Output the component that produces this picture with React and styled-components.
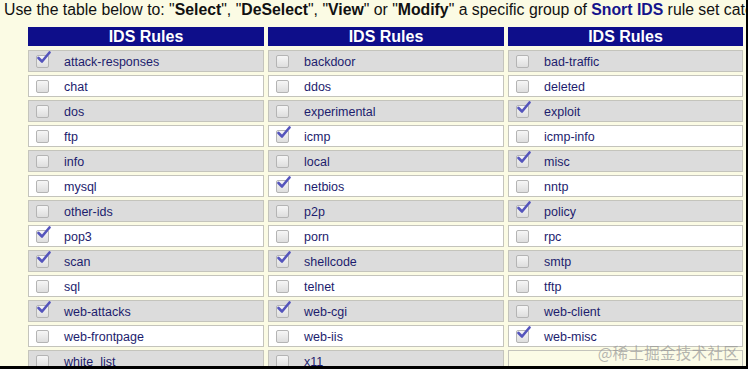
import React from "react";
import styled, { createGlobalStyle } from "styled-components";

const GlobalStyle = createGlobalStyle`
  html, body {
    margin: 0;
    padding: 0;
    background: #000;
  }
  body {
    font-family: "Liberation Sans", Arial, sans-serif;
  }
`;

const columns = [
  [
    ["attack-responses", true], ["chat", false], ["dos", false], ["ftp", false],
    ["info", false], ["mysql", false], ["other-ids", false], ["pop3", true],
    ["scan", true], ["sql", false], ["web-attacks", true], ["web-frontpage", false],
    ["white_list", false],
  ],
  [
    ["backdoor", false], ["ddos", false], ["experimental", false], ["icmp", true],
    ["local", false], ["netbios", true], ["p2p", false], ["porn", false],
    ["shellcode", true], ["telnet", false], ["web-cgi", true], ["web-iis", false],
    ["x11", false],
  ],
  [
    ["bad-traffic", false], ["deleted", false], ["exploit", true], ["icmp-info", false],
    ["misc", true], ["nntp", false], ["policy", true], ["rpc", false],
    ["smtp", false], ["tftp", false], ["web-client", false], ["web-misc", true],
    null,
  ],
];

export default function App() {
  const rows = columns[0].map((_, i) => columns.map((col) => col[i]));

  return (
    <>
      <GlobalStyle />
      <Frame>
        <Intro>
          Use the table below to: "<b>Select</b>", "<b>DeSelect</b>", "<b>View</b>" or "<b>Modify</b>" a
          specific group of <Brand>Snort IDS</Brand> rule set categories
        </Intro>
        <Grid>
          {columns.map((_, i) => (
            <Header key={"h" + i}>IDS Rules</Header>
          ))}
          {rows.map((row, r) =>
            row.map((item, c) =>
              item ? (
                <Cell key={r + "-" + c} $shade={r % 2 === 0}>
                  <Box $checked={item[1]}>
                    {item[1] && (
                      <svg width="15" height="13" viewBox="0 0 15 13">
                        <path
                          d="M2.5 7 L6 10.5 L13.5 1.5"
                          fill="none"
                          stroke="#5454bc"
                          strokeWidth="2.6"
                          strokeLinecap="round"
                          strokeLinejoin="round"
                        />
                      </svg>
                    )}
                  </Box>
                  <Label>{item[0]}</Label>
                </Cell>
              ) : (
                <Empty key={r + "-" + c} />
              )
            )
          )}
        </Grid>
        <Watermark>@稀土掘金技术社区</Watermark>
      </Frame>
    </>
  );
}

const Frame = styled.div`
  position: relative;
  width: 746px;
  height: 366px;
  overflow: hidden;
  background: #fbfbe4;
`;

const Intro = styled.div`
  white-space: nowrap;
  font-size: 15.8px;
  color: #111;
  padding: 1px 0 0 4px;
  height: 23px;
  line-height: 18px;
  b {
    font-weight: bold;
  }
`;

const Brand = styled.b`
  color: #14148c;
`;

const Grid = styled.div`
  display: grid;
  grid-template-columns: 236px 236px 235px;
  grid-template-rows: 20px;
  grid-auto-rows: 22px;
  column-gap: 4px;
  row-gap: 3px;
  margin: 3px 0 0 28px;
`;

const Header = styled.div`
  background: #0e0e8a;
  color: #fff;
  font-weight: bold;
  font-size: 16px;
  display: flex;
  align-items: center;
  justify-content: center;
  height: 19px;
`;

const Cell = styled.div`
  display: flex;
  align-items: center;
  box-sizing: border-box;
  border: 1px solid #c4c4bc;
  background: ${(p) => (p.$shade ? "#dcdcdc" : "#ffffff")};
  padding: 2px 0 0 7px;
`;

const Empty = styled.div`
  box-sizing: border-box;
  border: 1px solid #c4c4bc;
  background: #fbfbe6;
`;

const Box = styled.span`
  position: relative;
  width: 11px;
  height: 11px;
  border: 1px solid #b4b4b4;
  border-radius: 2px;
  background: linear-gradient(#f6f6f6, #dedede);
  margin: -2px 15px 0 0;
  flex: none;
  svg {
    position: absolute;
    left: -1px;
    top: -5px;
  }
`;

const Label = styled.span`
  font-size: 12.5px;
  color: #1c1c6e;
`;

const Watermark = styled.div`
  position: absolute;
  right: 7px;
  bottom: 3px;
  font-family: "Noto Sans CJK SC", sans-serif;
  font-size: 15.5px;
  color: rgba(150, 150, 150, 0.7);
  letter-spacing: 0.3px;
`;
